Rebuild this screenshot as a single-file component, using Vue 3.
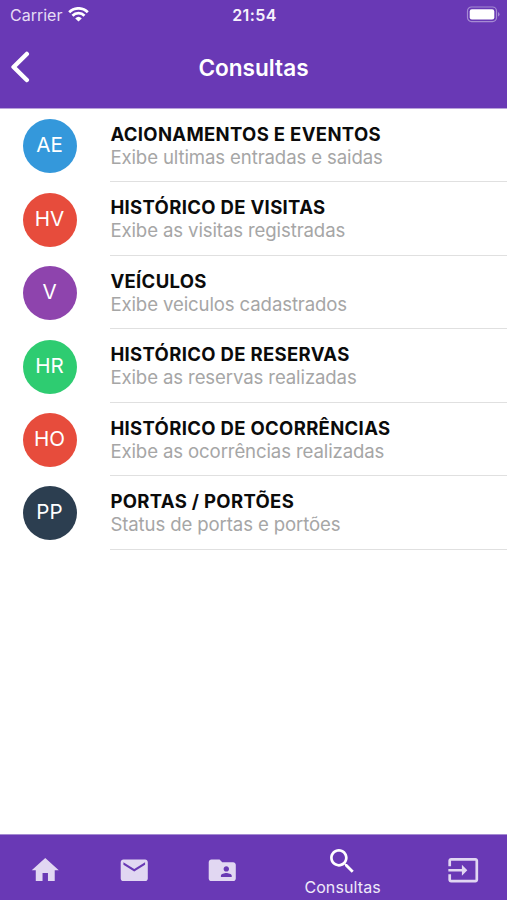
<script setup>
const rows = [
  { initials: 'AE', tone: 'blue', title: 'ACIONAMENTOS E EVENTOS', text: 'Exibe ultimas entradas e saidas' },
  { initials: 'HV', tone: 'red', title: 'HISTÓRICO DE VISITAS', text: 'Exibe as visitas registradas' },
  { initials: 'V', tone: 'purple', title: 'VEÍCULOS', text: 'Exibe veiculos cadastrados' },
  { initials: 'HR', tone: 'green', title: 'HISTÓRICO DE RESERVAS', text: 'Exibe as reservas realizadas' },
  { initials: 'HO', tone: 'red', title: 'HISTÓRICO DE OCORRÊNCIAS', text: 'Exibe as ocorrências realizadas' },
  { initials: 'PP', tone: 'navy', title: 'PORTAS / PORTÕES', text: 'Status de portas e portões' },
]

const tabs = [
  { id: 'home', path: 'M10 20v-6h4v6h5v-8h3L12 3 2 12h3v8z' },
  { id: 'mail', path: 'M20 4H4c-1.1 0-1.99.9-1.99 2L2 18c0 1.1.9 2 2 2h16c1.1 0 2-.9 2-2V6c0-1.1-.9-2-2-2zm0 4l-8 5-8-5V6l8 5 8-5v2z' },
  { id: 'folder', path: 'M20 6h-8l-2-2H4c-1.1 0-1.99.9-1.99 2L2 18c0 1.1.9 2 2 2h16c1.1 0 2-.9 2-2V8c0-1.1-.9-2-2-2zm-5 3c1.1 0 2 .9 2 2s-.9 2-2 2-2-.9-2-2 .9-2 2-2zm4 8h-8v-1c0-1.33 2.67-2 4-2s4 .67 4 2v1z' },
  { id: 'search', label: 'Consultas', path: 'M15.5 14h-.79l-.28-.27C15.41 12.59 16 11.11 16 9.5 16 5.91 13.09 3 9.5 3S3 5.91 3 9.5 5.91 16 9.5 16c1.61 0 3.09-.59 4.23-1.57l.27.28v.79l5 4.99L20.49 19l-4.99-5zm-6 0C7.01 14 5 11.99 5 9.5S7.01 5 9.5 5 14 7.01 14 9.5 11.99 14 9.5 14z' },
  { id: 'exit', path: 'M21 3.01H3c-1.1 0-2 .9-2 2V9h2V4.99h18v14.03H3V15H1v4.01c0 1.1.9 1.98 2 1.98h18c1.1 0 2-.88 2-1.98v-14c0-1.11-.9-2-2-2zM11 16l4-4-4-4v3H1v2h10v3z' },
]
</script>

<template>
  <div class="screen">
    <header class="header">
      <div class="status">
        <div class="carrier">
          <span>Carrier</span>
          <svg class="wifi" viewBox="0 0 21 15">
            <path d="M1.2 5.2a13.2 13.2 0 0 1 18.6 0" />
            <path d="M4.5 8.7a8.5 8.5 0 0 1 12 0" />
            <path class="wedge" d="M10.5 14.6L7.2 11.4a4.8 4.8 0 0 1 6.6 0z" />
          </svg>
        </div>
        <span class="time">21:54</span>
        <div class="power">
          <svg class="battery" viewBox="0 0 34 17">
            <rect class="shell" x="1.5" y="1" width="29" height="14.6" rx="4" />
            <rect class="charge" x="3.7" y="3.2" width="24.6" height="10.2" rx="2.2" />
            <path class="cap" d="M32 6v4.6q1.5-.7 1.5-2.3T32 6z" />
          </svg>
        </div>
      </div>
      <div class="bar">
        <svg class="back" viewBox="0 0 20 32"><path d="M16.8 3L3.6 16l13.2 13" /></svg>
        <h1>Consultas</h1>
        <span></span>
      </div>
    </header>

    <main class="list">
      <div v-for="row in rows" :key="row.title" class="row">
        <div class="avatar" :class="row.tone"><span>{{ row.initials }}</span></div>
        <div class="body">
          <div class="title">{{ row.title }}</div>
          <div class="text">{{ row.text }}</div>
        </div>
      </div>
    </main>

    <nav class="tabs">
      <div v-for="tab in tabs" :key="tab.id" class="tab" :class="{ active: tab.label }">
        <svg class="icon" viewBox="0 0 24 24"><path :d="tab.path" /></svg>
        <span v-if="tab.label">{{ tab.label }}</span>
      </div>
    </nav>
  </div>
</template>

<style>
body { background: #fff; }
</style>

<style scoped>
.screen {
  display: flex;
  flex-direction: column;
  height: 900px;
  overflow: hidden;
  background: #fff;
  font-family: Inter, "Liberation Sans", sans-serif;
}
.header {
  box-sizing: border-box;
  height: 109px;
  flex: none;
  background: #6939b5;
  border-bottom: 1px solid #b9a3da;
  color: #fff;
}
.status {
  display: grid;
  grid-template-columns: 1fr auto 1fr;
  align-items: center;
  height: 30px;
  padding: 0 7px 0 10px;
}
.carrier {
  display: flex;
  align-items: center;
  gap: 6px;
  color: #e6dcf4;
  font-size: 16px;
}
.wifi { width: 21px; height: 15px; margin-top: -2px; }
.wifi path { fill: none; stroke: #fff; stroke-width: 2.8; }
.wifi .wedge { fill: #fff; stroke: none; }
.time { margin-left: -1px; font-size: 16px; font-weight: 600; color: #f6f1fc; letter-spacing: 0.4px; }
.power { display: flex; justify-content: flex-end; margin-top: -2px; }
.battery { width: 34px; height: 17px; }
.shell { fill: none; stroke: #a68bd3; stroke-width: 1.2; }
.charge { fill: #fff; }
.cap { fill: #a68bd3; }
.bar {
  display: grid;
  grid-template-columns: 1fr auto 1fr;
  align-items: center;
  height: 74px;
  padding: 0 10px;
}
.back { width: 20px; height: 32px; }
.back path { fill: none; stroke: #fff; stroke-width: 4.5; stroke-linecap: round; stroke-linejoin: round; }
h1 { margin: 2px 0 0; font-size: 22.6px; line-height: 28px; font-weight: 600; }
.list { flex: 1; }
.row { display: flex; height: 73.45px; }
.avatar {
  display: flex;
  flex: none;
  justify-content: center;
  width: 54px;
  height: 54px;
  margin: 10.2px 33.5px 0 22.5px;
  border-radius: 50%;
  color: #fff;
  font-size: 20.6px;
  font-weight: 400;
  line-height: 52px;
}
.blue { background: #3498db; }
.red { background: #e74c3c; }
.purple { background: #8e44ad; }
.green { background: #2ecc71; }
.navy { background: #2c3e50; }
.body {
  flex: 1;
  box-sizing: border-box;
  padding-top: 13px;
  border-bottom: 1.4px solid #e0e0e0;
  white-space: nowrap;
}
.title { padding-left: 0.4px; color: #0b0b0b; font-size: 18.5px; font-weight: 650; line-height: 24px; letter-spacing: 0.33px; }
.text { padding-left: 0.4px; color: #a6a6a6; font-size: 18.6px; line-height: 23px; letter-spacing: -0.12px; }
.tabs {
  box-sizing: border-box;
  display: flex;
  height: 66.5px;
  flex: none;
  padding: 0 0 0 1.4px;
  background: #6939b5;
  border-top: 1px solid #a58bd2;
}
.tab {
  display: flex;
  flex-direction: column;
  align-items: center;
  width: 88.4px;
  padding-top: 19.5px;
  box-sizing: border-box;
  color: #e1d7f2;
}
.tab.active { flex: 1; padding-top: 10.5px; color: #fff; }
.icon { width: 32.5px; height: 32.5px; fill: currentColor; }
.tab span { margin-top: -1px; color: #f0eaf9; font-size: 16px; line-height: 20px; letter-spacing: 0.1px; }
</style>
